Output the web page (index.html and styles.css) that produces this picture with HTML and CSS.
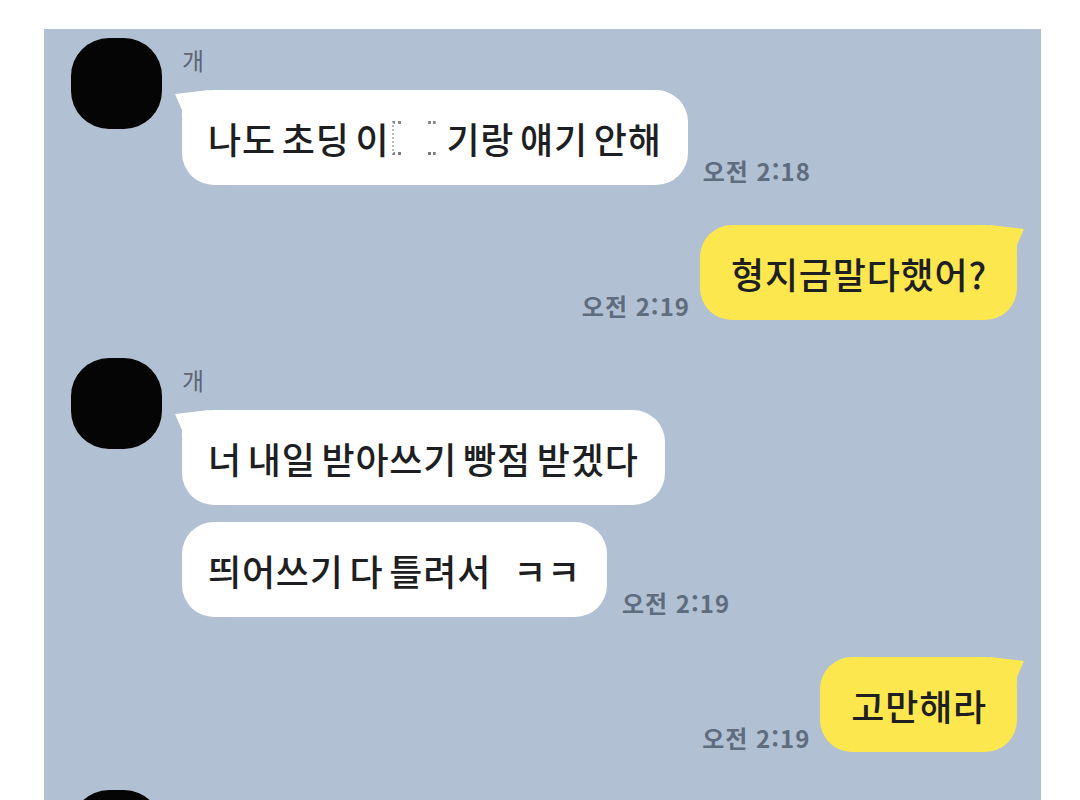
FILE: index.html
```html
<!DOCTYPE html>
<html lang="ko">
<head>
    <meta charset="UTF-8">
    <meta name="viewport" content="width=device-width, initial-scale=1.0">
    <title>채팅</title>
    <link rel="stylesheet" href="styles.css">
</head>
<body>
    <!-- Chat window -->
    <div class="chat">
        <!-- Friend: first group -->
        <div class="group">
            <div class="avatar"></div>
            <div class="group-body">
                <div class="name">개</div>
                <div class="line">
                    <div class="bubble tail">나도 초딩 이<span class="redact"><i class="mk mk-l"></i><i class="mk mk-m"></i></span>기랑 얘기 안해</div>
                    <span class="time">오전 2:18</span>
                </div>
            </div>
        </div>

        <!-- Me -->
        <div class="line mine gap-big">
            <span class="time">오전 2:19</span>
            <div class="bubble yellow tail">형지금말다했어?</div>
        </div>

        <!-- Friend: second group -->
        <div class="group gap-group">
            <div class="avatar"></div>
            <div class="group-body">
                <div class="name">개</div>
                <div class="line">
                    <div class="bubble tail">너 내일 받아쓰기 빵점 받겠다</div>
                </div>
                <div class="line gap-small">
                    <div class="bubble">띄어쓰기 다 틀려서<span class="kk">ㅋㅋ</span></div>
                    <span class="time">오전 2:19</span>
                </div>
            </div>
        </div>

        <!-- Me -->
        <div class="line mine gap-big">
            <span class="time">오전 2:19</span>
            <div class="bubble yellow tail">고만해라</div>
        </div>

        <!-- Friend: third group (cut off by the frame) -->
        <div class="group gap-group">
            <div class="avatar"></div>
            <div class="group-body">
                <div class="name">개</div>
            </div>
        </div>
    </div>
</body>
</html>
```

FILE: styles.css
```css
/* Basic reset */
* {
    margin: 0;
    padding: 0;
    box-sizing: border-box;
}

html, body {
    height: 100%;
    overflow: hidden;
}

body {
    background-color: #ffffff;
    font-family: "Noto Sans CJK KR", "Noto Sans", sans-serif;
    color: #1e1f22;
}

/* Chat window */
.chat {
    width: 997px;
    height: 800px;
    margin: 29px 0 0 44px;
    padding: 9px 24px 0 27px;
    background-color: #b1c0d2;
}

/* Friend message group */
.group {
    display: flex;
    gap: 20px;
}

.gap-group {
    margin-top: 38px;
}

.avatar {
    width: 91px;
    height: 91px;
    flex-shrink: 0;
    border-radius: 38px;
    background-color: #050505;
}

.group-body {
    display: flex;
    flex-direction: column;
    align-items: flex-start;
}

.name {
    margin-top: 8px;
    font-size: 24px;
    line-height: 28px;
    color: #5b6576;
    margin-bottom: 16px;
}

/* One row: bubble + time */
.line {
    display: flex;
    align-items: flex-end;
}

.line.mine {
    justify-content: flex-end;
}

.gap-big {
    margin-top: 40px;
}

.gap-small {
    margin-top: 17px;
}

/* Speech bubble */
.bubble {
    position: relative;
    display: flex;
    align-items: center;
    height: 95px;
    padding: 0 26px 0 26px;
    border-radius: 32px;
    background-color: #ffffff;
    font-size: 36px;
    font-weight: 500;
    letter-spacing: 0.8px;
    word-spacing: -5px;
    white-space: nowrap;
}

.bubble.yellow {
    background-color: #fce84e;
    padding: 0 30px 0 31px;
}

/* Little tail on the first bubble */
.bubble.tail::before {
    content: '';
    position: absolute;
    top: 0;
    left: -7px;
    width: 34px;
    height: 28px;
    background-color: inherit;
    clip-path: polygon(0 4px, 34px 0, 34px 28px, 7px 28px, 7px 20px);
}

.bubble.yellow.tail::before {
    left: auto;
    right: -7px;
    clip-path: polygon(100% 4px, 0 0, 0 28px, 27px 28px, 27px 20px);
}

.kk {
    margin-left: 22px;
}

/* Time stamp */
.time {
    font-size: 24px;
    line-height: 26px;
    font-weight: 700;
    color: #5f6c7e;
    letter-spacing: 1px;
    margin: 0 0 1px 15px;
    white-space: nowrap;
}

.line.mine .time {
    margin: 0 10px 1px 0;
}

/* Faded mosaic in the first message */
.redact {
    display: inline-flex;
    justify-content: space-between;
    width: 44px;
    height: 34px;
    margin: 0 10px 0 3px;
}

.mk {
    display: block;
    height: 34px;
}

.mk-l {
    width: 9px;
    border-left: 2px dotted #b8b8b8;
    border-top: 3px dotted #8a8a8a;
    border-bottom: 3px dotted #7a7a7a;
}

.mk-m {
    width: 8px;
    border-top: 3px dotted #8a8a8a;
    border-bottom: 3px dotted #7a7a7a;
}
```
